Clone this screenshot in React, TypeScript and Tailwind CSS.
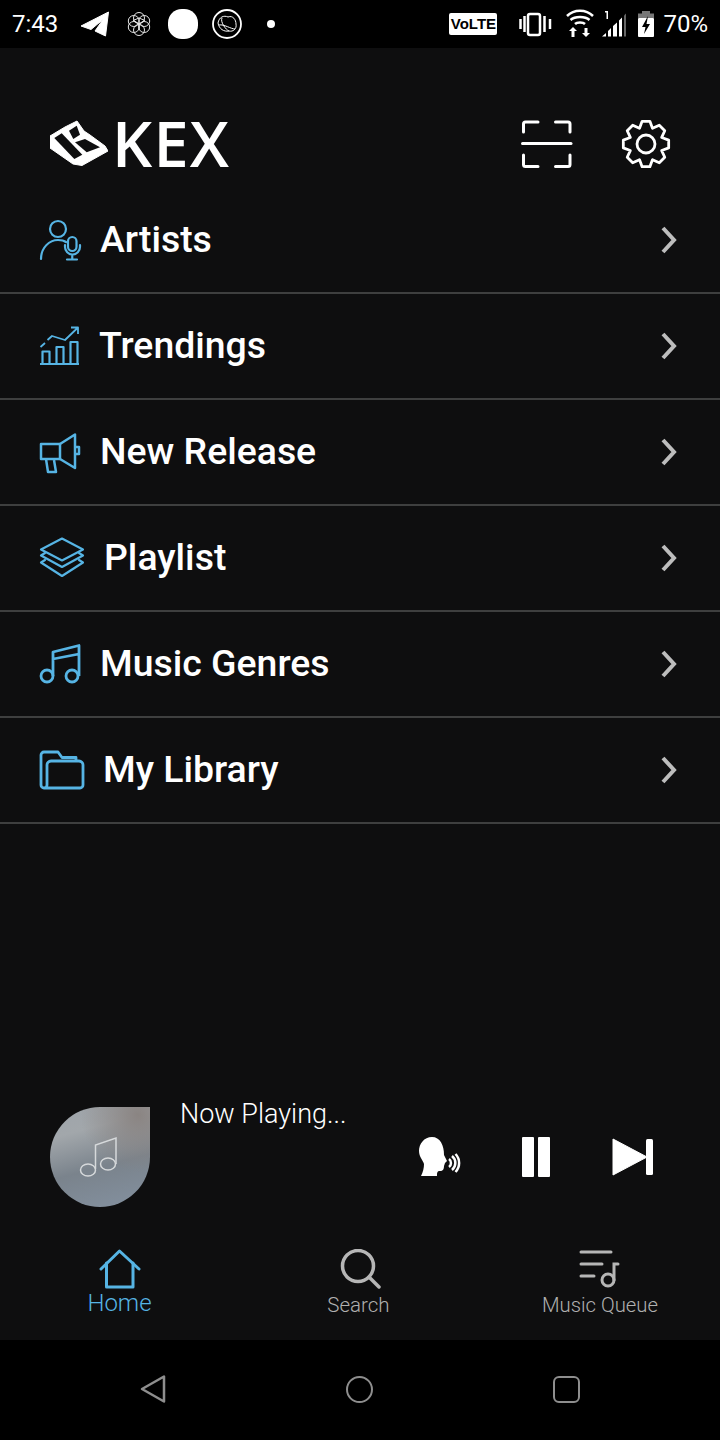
import React from 'react'

const BLUE = '#56b4e4'

// page pixels are used as the viewBox numbers, so each icon reads like the screenshot
const gearPath = () => {
    const cx = 25
    const cy = 25
    const pts: string[] = []
    for (let i = 0; i < 8; i++) {
        const a = (i * Math.PI) / 4 - Math.PI / 2
        const step = 0.2
        const p = (r: number, off: number) =>
            `${(cx + r * Math.cos(a + off)).toFixed(2)} ${(cy + r * Math.sin(a + off)).toFixed(2)}`
        pts.push(p(17, -step * 1.95), p(23, -step * 0.85), p(23, step * 0.85), p(17, step * 1.95))
    }
    return 'M' + pts.join(' L') + ' Z'
}

const ArtistsIcon = () => (
    <svg width="44" height="44" viewBox="38 218 44 44" fill="none" stroke={BLUE} strokeWidth="2.200" strokeLinecap="round" strokeLinejoin="round">
        <circle cx="58" cy="229" r="8" />
        <path d="M41 259 C41 248 49 240 58 240 C62 240 64 240.500 66 242" />
        <rect x="68" y="237" width="8.500" height="14" rx="4.250" />
        <path d="M65 245 V247 A7.500 7.500 0 0 0 80 247 V245 M72.250 255 V259 M67 259.500 H77" />
    </svg>
)

const TrendingsIcon = () => (
    <svg width="44" height="44" viewBox="38 324 44 44" fill="none" stroke={BLUE} strokeWidth="2.200" strokeLinejoin="round">
        <path d="M40 364 H79 M42.500 364 V351.500 H49.500 V364 M56.500 364 V347 H63.500 V364 M70.500 364 V342 H77.500 V364" />
        <path d="M40.500 347 L45 343 M47.500 340 L52 336 L65 340 L78 327.500 M71 327.500 H78 V334" strokeWidth="1.800" />
    </svg>
)

const ReleaseIcon = () => (
    <svg width="44" height="44" viewBox="38 428 44 44" fill="none" stroke={BLUE} strokeWidth="2.500" strokeLinejoin="round">
        <path d="M41 442 H60 V457 H41 Z" />
        <path d="M60 442 L75 432.500 V466 L60 457" />
        <path d="M75 445 H79 V452 H75" />
        <path d="M46 457 L48 470 H56 L54 458" />
    </svg>
)

const PlaylistIcon = () => (
    <svg width="48" height="44" viewBox="38 536 48 44" fill="none" stroke={BLUE} strokeWidth="2.200" strokeLinejoin="round" strokeLinecap="round">
        <path d="M62 538.500 L83 549.500 L62 560.500 L41 549.500 Z" />
        <path d="M45 553 L41 555.500 L62 567 L83 555.500 L79 553" />
        <path d="M45 560 L41 562.500 L62 576 L83 562.500 L79 560" />
    </svg>
)

const GenresIcon = () => (
    <svg width="44" height="44" viewBox="38 642 44 44" fill="none" stroke={BLUE} strokeWidth="2.800" strokeLinejoin="round">
        <circle cx="47" cy="676" r="6" />
        <circle cx="72" cy="676" r="6" />
        <path d="M53 676 V652 L79 645.500 V676 M53 659 L79 654" />
    </svg>
)

const LibraryIcon = () => (
    <svg width="48" height="44" viewBox="38 748 48 44" fill="none" stroke={BLUE} strokeWidth="2.800" strokeLinejoin="round">
        <path d="M44 788 H80 A3 3 0 0 0 83 785 V765 A4 4 0 0 0 79 761 H51 A4 4 0 0 0 47 765 V785 A3 3 0 0 1 44 788 A3 3 0 0 1 41 785 V755 A3 3 0 0 1 44 752 H58 L62 757.500 H76 V761" />
    </svg>
)

const rows = [
    { title: 'Artists', icon: <ArtistsIcon />, labelClass: 'ml-[18px]' },
    { title: 'Trendings', icon: <TrendingsIcon />, labelClass: 'ml-[17px]' },
    { title: 'New Release', icon: <ReleaseIcon />, labelClass: 'ml-[18px]' },
    { title: 'Playlist', icon: <PlaylistIcon />, labelClass: 'ml-[18px]' },
    { title: 'Music Genres', icon: <GenresIcon />, labelClass: 'ml-[18px]' },
    { title: 'My Library', icon: <LibraryIcon />, labelClass: 'ml-[17px]' },
]

const StatusBar = () => (
    <div className="h-12 shrink-0 bg-black flex items-center text-white font-['Roboto',sans-serif] text-[24px]">
        <span className="ml-3 w-[68px]">7:43</span>
        {/* Telegram */}
        <svg width="30" height="26" viewBox="80 12 30 26" fill="white">
            <path d="M108.500 13 L81 27 L91 30.500 L103 20.500 L95 32 L105.500 37 Z" strokeLinejoin="round" stroke="white" strokeWidth="1" />
        </svg>
        {/* flower */}
        <svg className="ml-[17px]" width="24" height="26" viewBox="127 11 24 26" fill="none" stroke="#e6e6e6" strokeWidth="1">
            {[0, 60, 120, 180, 240, 300].map((a) => (
                <circle key={a} cx={139 + 6 * Math.sin((a * Math.PI) / 180)} cy={24 - 6 * Math.cos((a * Math.PI) / 180)} r="5.500" />
            ))}
            <path d="M139 24 V30 M139 24 L133 20.500 M139 24 L145 20.500 M139 18 L133 20.500 M139 18 L145 20.500" />
        </svg>
        <div className="ml-[17px] w-[30px] h-[30px] bg-white rounded-[46%]" />
        {/* circle app */}
        <svg className="ml-[14px]" width="30" height="30" viewBox="212 9 30 30" fill="none" stroke="white">
            <circle cx="227" cy="24" r="14" strokeWidth="1.800" />
            <path d="M218 23 C219 17 224 15 228 17 C233 15 236 20 236 24 C237 29 233 32 229 31 C224 32 219 29 218 23 Z M219 25 C224 24 231 29 235 29 M222 18 C220 22 226 30 229 31" strokeWidth="1" />
        </svg>
        <div className="ml-[25px] w-2 h-2 bg-white rounded-full" />

        <div className="ml-auto flex items-center">
            <span className="w-12 h-[22px] bg-white rounded-[2px] text-black text-[15px] font-bold flex items-center justify-center font-['Liberation_Sans',sans-serif] mr-[-1px]">VoLTE</span>
            {/* vibrate */}
            <svg className="ml-[23px]" width="34" height="26" viewBox="519 11 34 26" fill="none" stroke="white">
                <rect x="528" y="14" width="12" height="21" rx="2" strokeWidth="2.500" />
                <path d="M520.500 19 V29 M524.500 16 V32 M544.500 16 V32 M550 19 V29" strokeWidth="2.500" />
            </svg>
            {/* wifi */}
            <svg className="ml-[12px]" width="30" height="30" viewBox="566 9 30 30" fill="none" stroke="white" strokeWidth="2.500">
                <path d="M568 16 C575 9 587 9 594 16 M571.500 20 C576 16 586 16 590.500 20 M576 24 C578 22 584 22 586 24" />
                <path d="M574 37 V30 M587 28 V35" strokeWidth="3" />
                <path d="M570 31 L574 27 L578 31 Z M583 33 L587 37 L591 33 Z" fill="white" stroke="none" />
            </svg>
            {/* signal */}
            <svg className="ml-[7px]" width="26" height="30" viewBox="603 9 26 30" fill="white">
                <path d="M603 36.500 L607 33 V36.500 Z M609 31 L612 28 V36.500 H609 Z M614 26 L618 22.500 V36.500 H614 Z M620 20.500 L623 17.500 V36.500 H620 Z" />
                <path d="M625 15.500 L627 13.500 V36.500 H625 Z" fill="#666" />
                <path d="M606 11 H609 V19 H607.500 V12.500 H606 Z" />
            </svg>
            {/* battery */}
            <svg className="ml-[10px]" width="16" height="28" viewBox="639 10 16 28">
                <path d="M643 11 H651 V13.500 H655 V18 H639 V13.500 H643 Z" fill="#777" />
                <rect x="639" y="18" width="16" height="19" rx="1" fill="white" />
                <path d="M649 16 L643 27 H646.500 L645 34 L651 24 H647.500 Z" fill="black" />
            </svg>
            <span className="ml-[9px] mr-3">70%</span>
        </div>
    </div>
)

const Header = () => (
    <div className="h-[140px] shrink-0 flex items-start pt-[72px] pl-[50px] pr-[49px]">
        {/* Logo */}
        <svg width="58" height="46" viewBox="50 121 58 46">
            <path d="M50 137 L65 128 L77 122 L84 132 L90 136 L105 147 L108 152 L82 166.500 L73 165 L50 149 Z" fill="white" stroke="white" strokeLinejoin="round" />
            <path d="M54.300 139 L61.700 134.300 L82.300 155.700 L74.300 160 Z" fill="#0e0e0f" />
            <path d="M69 131.700 L76.700 126.700 L80 135.700 L73.300 140 Z" fill="#0e0e0f" />
            <path d="M75 143.300 L85 140 L100 148.300 L86.700 153.300 Z" fill="#0e0e0f" />
        </svg>
        <span className="ml-[4px] text-white text-[63px] leading-[46px] font-semibold tracking-[1.2px] font-['Open_Sans',sans-serif]">KEX</span>

        <div className="ml-auto flex items-start">
            {/* Scan */}
            <svg width="52" height="50" viewBox="521 120 52 50" fill="none" stroke="white" strokeWidth="3" strokeLinecap="round" strokeLinejoin="round">
                <path d="M523.500 132 V124 A2 2 0 0 1 525.500 122 H538 M555.500 122 H568 A2 2 0 0 1 570 124 V132" />
                <path d="M522.500 143.500 H571" />
                <path d="M523.500 155 V164.500 A2 2 0 0 0 525.500 166.500 H538 M555.500 166.500 H568 A2 2 0 0 0 570 164.500 V155" />
            </svg>
            {/* Settings */}
            <svg className="ml-[48px] mt-[-1px]" width="50" height="50" viewBox="0 0 50 50" fill="none" stroke="white" strokeWidth="2.800" strokeLinejoin="round">
                <path d={gearPath()} />
                <circle cx="25" cy="25" r="9" />
            </svg>
        </div>
    </div>
)

const MenuRow = ({ title, icon, labelClass }: (typeof rows)[number]) => (
    <div className="h-[106px] shrink-0 flex items-center pl-[38px] pr-[42px] border-b-2 border-[#3e3f3f]">
        {icon}
        <span className={`${labelClass} mb-[2px] text-white text-[37.4px] font-medium font-['Roboto',sans-serif]`}>{title}</span>
        <svg className="ml-auto" width="18" height="30" viewBox="0 0 18 30" fill="none" stroke="#bdbdbd" strokeWidth="4" strokeLinejoin="miter">
            <path d="M3 3 L14 15 L3 27" />
        </svg>
    </div>
)

const NowPlaying = () => (
    <div className="mt-auto flex items-start pl-[50px] pr-[66px]">
        <div className="relative w-[100px] h-[100px] rounded-full rounded-tr-none bg-[radial-gradient(circle_at_88%_8%,#8a8482_0%,#8a848200_45%),linear-gradient(165deg,#9ea4aa_0%,#a2a7ab_25%,#7a838c_58%,#8491a0_100%)] overflow-hidden">
            <svg className="absolute inset-0" width="100" height="100" viewBox="50 1107 100 100" fill="none" stroke="#d6d9db" strokeWidth="1.500">
                <ellipse cx="88" cy="1170" rx="7.500" ry="6" />
                <ellipse cx="108" cy="1164" rx="7.500" ry="6" />
                <path d="M95.500 1169 V1145 L116 1138 V1164" />
            </svg>
        </div>
        <span className="ml-[30px] text-white text-[27px] leading-[14px] font-light font-['Roboto',sans-serif]">Now Playing...</span>
        <div className="ml-auto mt-[30px] flex items-center">
            {/* Voice */}
            <svg className="ml-[1px]" width="44" height="40" viewBox="418 1137 44 40" fill="none">
                <path d="M432 1137 C424 1137 419 1144 419 1151 C419 1157 423 1160 424 1164 C424 1168 423 1172 421 1176 L437 1176 C437 1173 437 1171 440 1171 C443 1171 444 1169 444 1166 L445 1163 L447 1161 L444 1155 C444 1145 440 1137 432 1137 Z" fill="white" />
                <path d="M449 1159 A5 5 0 0 1 449 1167 M452 1156 A9 9 0 0 1 452 1170 M455.500 1154 A13 13 0 0 1 455.500 1172" stroke="white" strokeWidth="2.500" />
            </svg>
            {/* Pause */}
            <svg className="ml-[59px]" width="30" height="40" viewBox="521 1137 30 40" fill="white">
                <rect x="522" y="1137" width="12" height="40" rx="1" />
                <rect x="538" y="1137" width="12" height="40" rx="1" />
            </svg>
            {/* Next */}
            <svg className="ml-[61px]" width="42" height="40" viewBox="611 1137 42 40" fill="white">
                <path d="M612 1139 L646 1157 L612 1175 Z" stroke="white" strokeLinejoin="round" />
                <rect x="645" y="1139" width="7" height="36" rx="1.500" />
            </svg>
        </div>
    </div>
)

const TabBar = () => (
    <div className="h-[133px] pt-[32px] shrink-0 grid grid-cols-3 font-light font-['Roboto',sans-serif]">
        <div className="flex flex-col items-center pt-[10px] pr-[1px]">
            <svg width="44" height="40" viewBox="98 1249 44 40" fill="none" stroke={BLUE} strokeWidth="3" strokeLinecap="round" strokeLinejoin="round">
                <path d="M101 1269 L119.500 1251 L139 1269" />
                <path d="M106.500 1263 V1287 H133 V1263" />
            </svg>
            <span className="text-[24px] leading-[28px] text-[#56b4e4]">Home</span>
        </div>
        <div className="flex flex-col items-center pt-[10px] pr-[3px]">
            <svg className="ml-[3px]" width="44" height="40" viewBox="337 1249 44 40" fill="none" stroke="#b6b6b6" strokeWidth="3.500" strokeLinecap="round">
                <circle cx="357" cy="1266" r="15.500" />
                <path d="M368 1277 L378 1287" />
            </svg>
            <span className="mt-[2px] text-[20.500px] leading-[28px] text-[#b0b0b0]">Search</span>
        </div>
        <div className="flex flex-col items-center pt-[10px]">
            <svg width="44" height="40" viewBox="578 1249 44 40" fill="none" stroke="#b6b6b6" strokeWidth="3" strokeLinecap="round">
                <path d="M581 1252 H611 M581 1264 H602 M581 1276 H594" />
                <circle cx="608" cy="1280" r="6" />
                <path d="M614 1280 V1264 H618" />
            </svg>
            <span className="mt-[2px] text-[20.300px] leading-[28px] text-[#b0b0b0]">Music Queue</span>
        </div>
    </div>
)

const SystemNav = () => (
    <div className="h-[100px] shrink-0 bg-black flex items-center pb-[2px] pl-[140px] pr-[140px] justify-between">
        <svg width="28" height="28" viewBox="140 1375 28 28" fill="none" stroke="#8e8e8e" strokeWidth="2.500" strokeLinejoin="round">
            <path d="M142 1389 L164 1376.500 V1401.500 Z" />
        </svg>
        <div className="w-[27px] h-[27px] ml-[-2px] rounded-full border-[2.5px] border-[#8e8e8e]" />
        <div className="w-[27px] h-[27px] rounded-[6px] border-[2.5px] border-[#8e8e8e]" />
    </div>
)

const App = () => {
    return (
        <div className="w-[720px] h-[1440px] flex flex-col bg-[#0e0e0f] overflow-hidden">
            <StatusBar />
            <Header />
            {rows.map((row) => (
                <MenuRow key={row.title} {...row} />
            ))}
            <NowPlaying />
            <TabBar />
            <SystemNav />
        </div>
    )
}

export default App
